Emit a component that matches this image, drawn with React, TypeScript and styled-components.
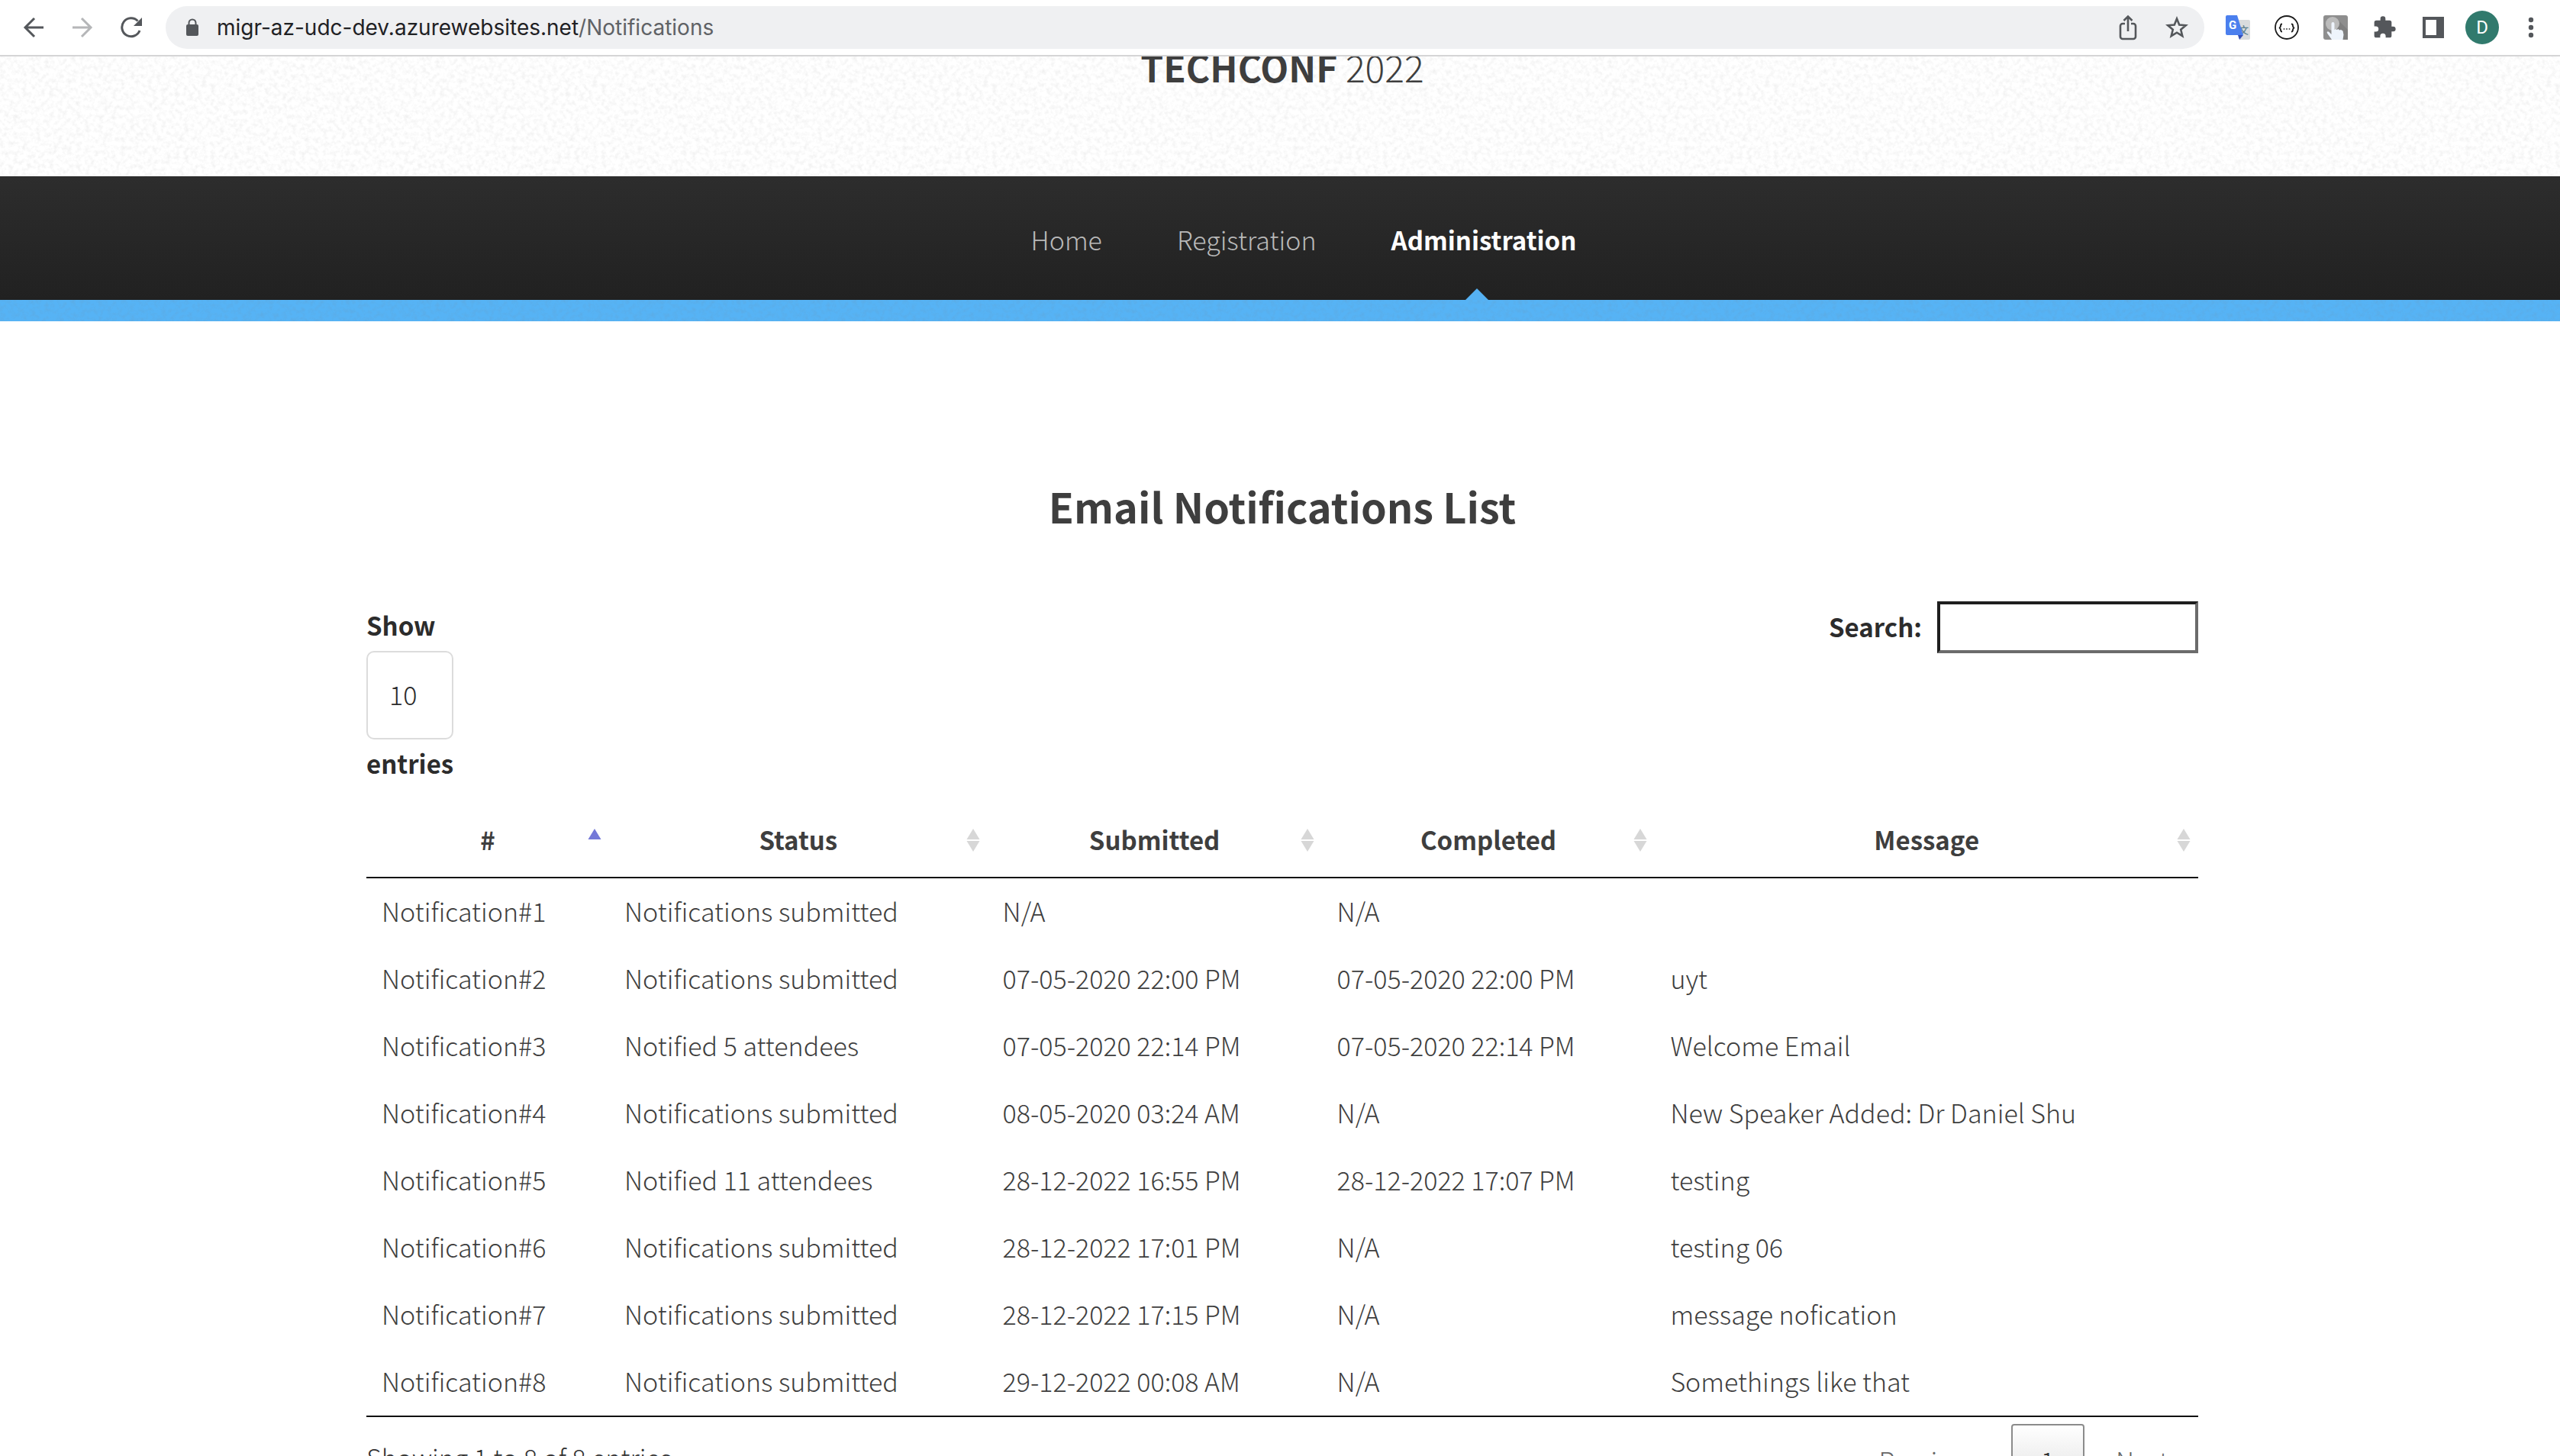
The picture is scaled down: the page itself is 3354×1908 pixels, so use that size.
import React from "react";
import styled, { createGlobalStyle, css } from "styled-components";

const grain = (alpha: number, tone: number) =>
  `url("data:image/svg+xml,${encodeURIComponent(
    `<svg xmlns='http://www.w3.org/2000/svg' width='512' height='512'><filter id='n' x='0' y='0' width='100%' height='100%'><feTurbulence type='fractalNoise' baseFrequency='0.17' numOctaves='3' seed='7' stitchTiles='stitch'/><feColorMatrix values='0 0 0 0 ${tone} 0 0 0 0 ${tone} 0 0 0 0 ${tone} ${alpha} 0 0 0 ${-alpha * 0.42}'/></filter><rect width='512' height='512' filter='url(#n)'/></svg>`
  )}")`;

const GlobalStyle = createGlobalStyle`
  *, *::before, *::after { box-sizing: border-box; }
  body {
    margin: 0;
    background: #fff;
    color: #3e3e3e;
    font-family: "Source Sans Pro", "Noto Sans CJK SC", "Noto Sans", sans-serif;
    font-size: 34px;
    font-weight: 300;
    line-height: 48px;
  }
  button, input, select { font: inherit; color: inherit; margin: 0; }
`;

const Window = styled.div`
  display: flex;
  flex-direction: column;
  height: 100vh;
  overflow: hidden;
`;

const Toolbar = styled.div`
  flex: none;
  display: flex;
  align-items: center;
  height: 74px;
  padding: 0 6px 0 12px;
  background: #fff;
  border-bottom: 2px solid #d5d5d6;
`;

const IconButton = styled.button<{ $muted?: boolean }>`
  flex: none;
  display: flex;
  align-items: center;
  justify-content: center;
  width: 64px;
  height: 56px;
  padding: 0;
  border: 0;
  background: none;
  color: ${(p) => (p.$muted ? "#b5b6b8" : "#54575b")};
  svg { display: block; }
`;

const AddressBar = styled.div`
  flex: 1;
  display: flex;
  align-items: center;
  height: 56px;
  margin: 0 12px 0 13px;
  padding: 0 4px 0 26px;
  border-radius: 28px;
  background: #eff0f2;
`;

const Url = styled.div`
  flex: 1;
  padding-left: 23px;
  font-family: Inter, Roboto, sans-serif;
  font-size: 28px;
  font-weight: 400;
  line-height: 40px;
  color: #5f6266;
  b { font-weight: 400; color: #1f2124; }
`;

const Avatar = styled.span`
  display: flex;
  align-items: center;
  justify-content: center;
  width: 44px;
  height: 44px;
  border-radius: 50%;
  background: #317a6d;
  color: #fff;
  font: 400 24px/44px Roboto, sans-serif;
`;

const Viewport = styled.div`
  flex: 1;
  min-height: 0;
  overflow: hidden;
`;

const Header = styled.header`
  display: flow-root;
  height: 157px;
  padding-left: 6px;
  background: ${grain(0.4, 0.45)} #fff;
  text-align: center;
`;

const Logo = styled.h1`
  margin: -11px 0 0;
  font-size: 48px;
  font-weight: 300;
  line-height: 48px;
  b { font-weight: 700; }
`;

const Nav = styled.nav`
  display: flex;
  justify-content: center;
  align-items: stretch;
  gap: 98px;
  height: 162px;
  padding-left: 62px;
  background: linear-gradient(#2d2d2d, #212121);
`;

const Band = styled.div`
  height: 28px;
  background: ${grain(0.25, 0.2)} #56b3f5;
`;

const NavLink = styled.a<{ $active?: boolean }>`
  position: relative;
  display: flex;
  align-items: center;
  padding-top: 4px;
  color: #b9b9b9;
  text-decoration: none;
  ${(p) =>
    p.$active &&
    css`
      color: #fff;
      font-size: 33px;
      font-weight: 700;
      &::after {
        content: "";
        position: absolute;
        left: calc(50% - 24px);
        bottom: 0;
        border: 15px solid transparent;
        border-top: 0;
        border-bottom-color: #55b1f3;
      }
    `}
`;

const Main = styled.main`
  width: 2406px;
  max-width: 100%;
  margin: 0 auto;
  padding: 212px 0 0 6px;
`;

const Title = styled.h2`
  margin: 0 0 95px;
  font-size: 54px;
  font-weight: 700;
  line-height: 60px;
  text-align: center;
`;

const Controls = styled.div`
  display: flex;
  justify-content: space-between;
  align-items: flex-start;
  color: #2c2c2c;
  font-size: 33px;
  font-weight: 700;
`;

const LengthLabel = styled.label`
  display: flex;
  flex-direction: column;
  align-items: flex-start;
  line-height: 62px;
`;

const LengthSelect = styled.select`
  appearance: none;
  width: 114px;
  height: 116px;
  margin-top: 3px;
  padding: 0 28px 2px;
  border: 2px solid #dcdcdc;
  border-radius: 10px;
  background: #fff;
  font-size: 34px;
  font-weight: 300;
`;

const SearchLabel = styled.label`
  display: flex;
  align-items: flex-start;
  gap: 20px;
  line-height: 66px;
`;

const SearchInput = styled.input`
  width: 342px;
  height: 68px;
  padding: 4px 8px;
  border: 4px solid;
  border-color: #1e1e1e #6b6b6b #6b6b6b #1e1e1e;
  border-radius: 0;
  background: #fff;
  font-weight: 300;
`;

const Table = styled.table`
  width: 100%;
  margin-top: 18px;
  table-layout: fixed;
  border-collapse: separate;
  border-spacing: 0;
  border-bottom: 2px solid #111;
`;

const Col = styled.col<{ $width?: string }>`
  width: ${(p) => p.$width ?? "auto"};
`;

const HeadCell = styled.th`
  position: relative;
  padding: 27px 36px 25px;
  border-bottom: 2px solid #111;
  font-size: 33px;
  font-weight: 700;
  text-align: center;
`;

const SortMark = styled.svg`
  position: absolute;
  right: 10px;
  top: 37px;
`;

const Cell = styled.td`
  height: 88px;
  padding: 19px 20px 21px;
`;

const Footer = styled.div`
  display: flex;
  justify-content: space-between;
  align-items: flex-start;
  color: #333;
`;

const Info = styled.div`
  padding-top: 29px;
`;

const Pager = styled.div`
  display: flex;
  gap: 2px;
  padding-top: 9px;
`;

const PageButton = styled.button<{ $current?: boolean }>`
  height: 96px;
  padding: 0 37px;
  border: 2px solid ${(p) => (p.$current ? "#8b8b8b" : "transparent")};
  border-radius: 4px;
  background: ${(p) => (p.$current ? "linear-gradient(#fff, #dcdcdc)" : "none")};
  color: ${(p) => (p.$current ? "#333" : "#666")};
`;

const stroke = { fill: "none", stroke: "currentColor", strokeWidth: 3 } as const;

const BackIcon = () => (
  <svg width="28" height="28" viewBox="0 0 28 28" {...stroke}>
    <path d="M27 14H3M15 2 3 14l12 12" />
  </svg>
);
const ForwardIcon = () => (
  <svg width="28" height="28" viewBox="0 0 28 28" {...stroke}>
    <path d="M1 14h24M13 2l12 12-12 12" />
  </svg>
);
const ReloadIcon = () => (
  <svg width="28" height="28" viewBox="0 0 28 28" {...stroke}>
    <path d="M25 18A12 12 0 1 1 22.500 5.500" />
    <path d="M28 1v11H17z" fill="currentColor" stroke="none" />
  </svg>
);
const LockIcon = () => (
  <svg width="18" height="24" viewBox="0 0 18 24" fill="#54575b">
    <rect x="1" y="8" width="16" height="15" rx="2" />
    <path d="M4.500 9V6a4.500 4.500 0 0 1 9 0v3" fill="none" stroke="#54575b" strokeWidth="2" />
  </svg>
);
const ShareIcon = () => (
  <svg width="24" height="34" viewBox="0 0 24 34" {...stroke} strokeWidth="2.6">
    <path d="M8 12H5a3 3 0 0 0-3 3v14a3 3 0 0 0 3 3h14a3 3 0 0 0 3-3V15a3 3 0 0 0-3-3h-3M12 22V3M6.500 8 12 2.500 17.500 8" />
  </svg>
);
const StarIcon = () => (
  <svg width="30" height="30" viewBox="0 0 30 30" {...stroke} strokeWidth="2.6">
    <path d="m15 3.500 3.200 8 8.600.7-6.600 5.600 2.100 8.400-7.300-4.500-7.300 4.500 2.100-8.400-6.600-5.600 8.600-.7z" />
  </svg>
);
const TranslateIcon = () => (
  <svg width="32" height="32" viewBox="0 0 32 32">
    <path d="M14 6h16a2 2 0 0 1 2 2v22a2 2 0 0 1-2 2H18z" fill="#d9dbdd" />
    <text x="17" y="24" fontSize="13" fontWeight="500" fill="#5d7f8c" fontFamily="Noto Sans CJK SC">文</text>
    <path d="M16 26h7l-5 6z" fill="#3650b8" />
    <path d="M2 0h13l8 26H2a2 2 0 0 1-2-2V2a2 2 0 0 1 2-2z" fill="#4b7fee" />
    <text x="4" y="18" fontSize="15" fontWeight="700" fill="#fff" fontFamily="Roboto">G</text>
  </svg>
);
const JsonIcon = () => (
  <svg width="32" height="32" viewBox="0 0 32 32" fill="none" stroke="#1c1c1c">
    <circle cx="16" cy="16" r="15" strokeWidth="1.800" />
    <path d="M10 11.500c-2 0-2 1-2 2.200s0 2.300-2 2.800c2 .5 2 1.500 2 2.800s0 2.200 2 2.200M22 11.500c2 0 2 1 2 2.200s0 2.300 2 2.800c-2 .5-2 1.500-2 2.800s0 2.200-2 2.200" strokeWidth="1.800" />
    <path d="M11.700 18h1.600M15.200 18h1.600M18.700 18h1.600" strokeWidth="1.600" />
  </svg>
);
const TouchIcon = () => (
  <svg width="32" height="32" viewBox="0 0 32 32">
    <rect width="32" height="32" rx="3" fill="#8e8e8e" />
    <path d="m18 5 14 14v13H16z" fill="#7f7f7f" />
    <circle cx="12" cy="11" r="9" fill="#bcbcbc" />
    <path d="M10.500 11a2 2 0 0 1 4 0v8l2-1 1 1 2-1 1.500 1.500 2-.5 2.500 1.500 1 5-1 6.500H11l-6-8.500c-1-2 1-3 2.500-1.500l3 3z" fill="#eef4fc" />
  </svg>
);
const PuzzleIcon = () => (
  <svg width="32" height="32" viewBox="0 0 24 24" fill="currentColor">
    <path d="M20.500 11H19V7a2 2 0 0 0-2-2h-4V3.500a2.500 2.500 0 0 0-5 0V5H4a2 2 0 0 0-2 2v3.800h1.500a2.700 2.700 0 0 1 0 5.400H2V20a2 2 0 0 0 2 2h3.800v-1.500a2.700 2.700 0 0 1 5.400 0V22H17a2 2 0 0 0 2-2v-4h1.500a2.500 2.500 0 0 0 0-5z" />
  </svg>
);
const PanelIcon = () => (
  <svg width="28" height="28" viewBox="0 0 28 28">
    <path d="M0 0h28v28H0zM4 4v20h14V4z" fill="currentColor" fillRule="evenodd" />
  </svg>
);
const MenuIcon = () => (
  <svg width="8" height="28" viewBox="0 0 8 28" fill="currentColor">
    <circle cx="4" cy="4" r="3.200" />
    <circle cx="4" cy="14" r="3.200" />
    <circle cx="4" cy="24" r="3.200" />
  </svg>
);

const SortIcon = ({ active }: { active?: boolean }) => (
  <SortMark width="18" height="30" viewBox="0 0 18 30" aria-hidden="true">
    <path d="M9 0l8.500 14H.5z" fill={active ? "#7479d8" : "#d7d7d7"} />
    {!active && <path d="M9 30l8.500-14H.5z" fill="#d7d7d7" />}
  </SortMark>
);

const columns: { label: string; width?: string }[] = [
  { label: "#", width: "13.25%" },
  { label: "Status", width: "20.65%" },
  { label: "Submitted", width: "18.25%" },
  { label: "Completed", width: "18.2%" },
  { label: "Message" },
];

const rows = [
  ["Notification#1", "Notifications submitted", "N/A", "N/A", ""],
  ["Notification#2", "Notifications submitted", "07-05-2020 22:00 PM", "07-05-2020 22:00 PM", "uyt"],
  ["Notification#3", "Notified 5 attendees", "07-05-2020 22:14 PM", "07-05-2020 22:14 PM", "Welcome Email"],
  ["Notification#4", "Notifications submitted", "08-05-2020 03:24 AM", "N/A", "New Speaker Added: Dr Daniel Shu"],
  ["Notification#5", "Notified 11 attendees", "28-12-2022 16:55 PM", "28-12-2022 17:07 PM", "testing"],
  ["Notification#6", "Notifications submitted", "28-12-2022 17:01 PM", "N/A", "testing 06"],
  ["Notification#7", "Notifications submitted", "28-12-2022 17:15 PM", "N/A", "message nofication"],
  ["Notification#8", "Notifications submitted", "29-12-2022 00:08 AM", "N/A", "Somethings like that"],
];

export default function App() {
  return (
    <Window>
      <GlobalStyle />
      <Toolbar>
        <IconButton aria-label="Back"><BackIcon /></IconButton>
        <IconButton aria-label="Forward" $muted><ForwardIcon /></IconButton>
        <IconButton aria-label="Reload"><ReloadIcon /></IconButton>
        <AddressBar>
          <LockIcon />
          <Url><b>migr-az-udc-dev.azurewebsites.net</b>/Notifications</Url>
          <IconButton aria-label="Share"><ShareIcon /></IconButton>
          <IconButton aria-label="Bookmark"><StarIcon /></IconButton>
        </AddressBar>
        <IconButton aria-label="Translate"><TranslateIcon /></IconButton>
        <IconButton aria-label="JSON viewer"><JsonIcon /></IconButton>
        <IconButton aria-label="Touch"><TouchIcon /></IconButton>
        <IconButton aria-label="Extensions"><PuzzleIcon /></IconButton>
        <IconButton aria-label="Side panel"><PanelIcon /></IconButton>
        <IconButton aria-label="Profile"><Avatar>D</Avatar></IconButton>
        <IconButton aria-label="Menu"><MenuIcon /></IconButton>
      </Toolbar>
      <Viewport>
        <Header>
          <Logo><b>TECHCONF</b> 2022</Logo>
        </Header>
        <Nav>
          <NavLink href="#home">Home</NavLink>
          <NavLink href="#registration">Registration</NavLink>
          <NavLink href="#administration" $active>Administration</NavLink>
        </Nav>
        <Band />
        <Main>
          <Title>Email Notifications List</Title>
          <Controls>
            <LengthLabel>
              Show
              <LengthSelect defaultValue="10">
                <option>10</option>
                <option>25</option>
                <option>50</option>
              </LengthSelect>
              entries
            </LengthLabel>
            <SearchLabel>
              Search:
              <SearchInput type="search" />
            </SearchLabel>
          </Controls>
          <Table>
            <colgroup>
              {columns.map((c) => <Col key={c.label} $width={c.width} />)}
            </colgroup>
            <thead>
              <tr>
                {columns.map((c, i) => (
                  <HeadCell key={c.label} scope="col">
                    {c.label}
                    <SortIcon active={i === 0} />
                  </HeadCell>
                ))}
              </tr>
            </thead>
            <tbody>
              {rows.map((row) => (
                <tr key={row[0]}>
                  {row.map((value, i) => <Cell key={i}>{value}</Cell>)}
                </tr>
              ))}
            </tbody>
          </Table>
          <Footer>
            <Info>Showing 1 to 8 of 8 entries</Info>
            <Pager>
              <PageButton>Previous</PageButton>
              <PageButton $current>1</PageButton>
              <PageButton>Next</PageButton>
            </Pager>
          </Footer>
        </Main>
      </Viewport>
    </Window>
  );
}
